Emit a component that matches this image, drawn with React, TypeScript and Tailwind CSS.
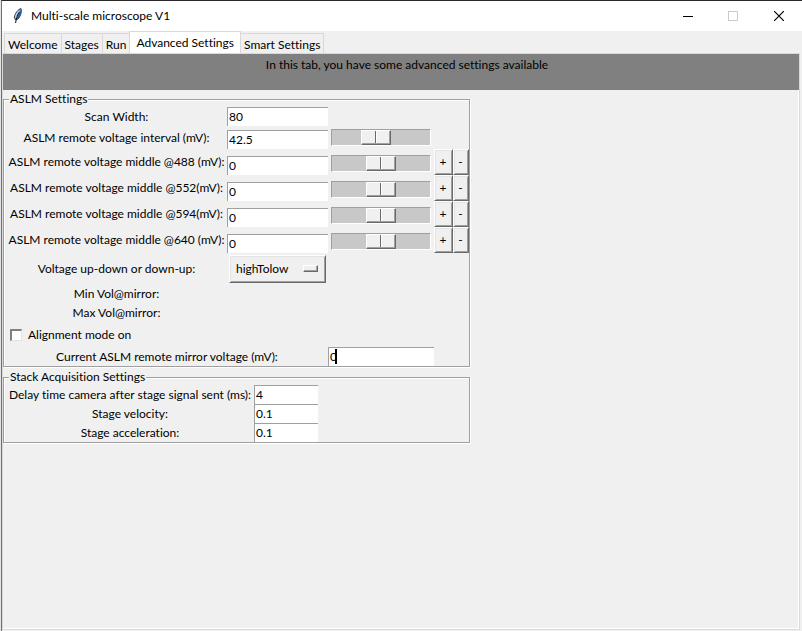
import React, { useState } from "react";

interface EntryProps {
  id: string;
  value: string;
  className?: string;
}

const Entry: React.FC<EntryProps> = ({ id, value, className = "" }) => (
  <input
    id={id}
    type="text"
    defaultValue={value}
    className={`h-[19px] w-full min-w-0 border-t border-l border-[#a0a0a0] bg-white px-px pb-0.5 text-[12px] leading-4 outline-none ${className}`}
  />
);

const Slider: React.FC<{ label: string; value: number }> = ({ label, value }) => (
  <div className="self-end px-[3px] pb-[3px]">
    <input
      type="range"
      aria-label={label}
      min={0}
      max={100}
      step={0.5}
      defaultValue={value}
      className="block h-[17px] w-full min-w-0 appearance-none border border-t-[#a0a0a0] border-r-white border-b-white border-l-[#a0a0a0] bg-[#c8c8c8] outline-none [&::-webkit-slider-thumb]:h-[15px] [&::-webkit-slider-thumb]:w-[30px] [&::-webkit-slider-thumb]:appearance-none [&::-webkit-slider-thumb]:border [&::-webkit-slider-thumb]:border-t-white [&::-webkit-slider-thumb]:border-l-white [&::-webkit-slider-thumb]:border-r-[#696969] [&::-webkit-slider-thumb]:border-b-[#696969] [&::-webkit-slider-thumb]:bg-[linear-gradient(90deg,#f0f0f0_13px,#696969_13px,#696969_14px,#fff_14px,#fff_15px,#f0f0f0_15px)] [&::-webkit-slider-thumb]:shadow-[inset_-1px_-1px_0_#a0a0a0]"
    />
  </div>
);

const StepButton: React.FC<{ sign: string; label: string }> = ({ sign, label }) => (
  <button
    aria-label={label}
    className="flex h-[26px] items-center justify-center border border-t-white border-r-[#696969] border-b-[#696969] border-l-white bg-[#f0f0f0] pr-px text-[12px] leading-4 shadow-[inset_1px_1px_0_#e3e3e3,inset_-1px_-1px_0_#a0a0a0]">
    {sign}
  </button>
);

const Group: React.FC<{ title: string; children: React.ReactNode }> = ({ title, children }) => (
  <fieldset className="min-w-0 border border-[#a0a0a0] pl-0.5 shadow-[1px_1px_0_#fff,inset_1px_1px_0_#fff]">
    <legend className="ml-[3px] bg-[#f0f0f0] px-px leading-4">{title}</legend>
    {children}
  </fieldset>
);

const tabs = ["Welcome", "Stages", "Run", "Advanced Settings", "Smart Settings"];

const channels = [
  { id: "v488", label: "ASLM remote voltage middle @488 (mV):" },
  { id: "v552", label: "ASLM remote voltage middle @552(mV):" },
  { id: "v594", label: "ASLM remote voltage middle @594(mV):" },
  { id: "v640", label: "ASLM remote voltage middle @640 (mV):" },
];

const stack = [
  { id: "delay", label: "Delay time camera after stage signal sent (ms):", value: "4" },
  { id: "velocity", label: "Stage velocity:", value: "0.1" },
  { id: "acceleration", label: "Stage acceleration:", value: "0.1" },
];

const row = "grid grid-cols-[221px_101px_1fr_35px] items-center";

const TitleBar = () => (
  <header className="flex h-[30px] shrink-0 items-center bg-white pl-2">
    <svg width="16" height="18" viewBox="0 0 16 18" aria-hidden="true">
      <path d="M11 1.500C8.500 2.200 4.800 6 4.300 10.500L5.500 13L8 12C10.500 9.500 12 5 11 1.500z" fill="#6aa5de" stroke="#222" strokeWidth="0.8" />
      <path d="M11.300 2C12 5.500 10.500 9.500 8 12L6.500 12.800C8 9 9.500 6 11.300 2z" fill="#2d5f96" />
      <path d="M9.500 5C8 7.500 6.500 10 5.600 16" fill="none" stroke="#111" strokeWidth="1" />
      <path d="M9 3.800C7 5.500 5.800 8 5.500 10.500" fill="none" stroke="#c9def2" strokeWidth="1" />
    </svg>
    <h1 className="ml-[5px] flex-1 text-[12px] leading-4">Multi-scale microscope V1</h1>
    <button aria-label="Minimize" className="flex h-full w-[45px] items-center justify-center">
      <svg width="10" height="10" shapeRendering="crispEdges">
        <path d="M0 5.500h10" stroke="#000" />
      </svg>
    </button>
    <button aria-label="Maximize" disabled className="flex h-full w-[46px] items-center justify-center">
      <svg width="10" height="10" shapeRendering="crispEdges">
        <rect x="0.5" y="0.5" width="9" height="9" fill="none" stroke="#ccc" />
      </svg>
    </button>
    <button aria-label="Close" className="flex h-full w-[46px] items-center justify-center">
      <svg width="10" height="10">
        <path d="M0 0l10 10M10 0L0 10" stroke="#000" strokeWidth="1.2" />
      </svg>
    </button>
  </header>
);

const AslmSettings = () => (
  <Group title="ASLM Settings">
    <div className={`${row} h-5`}>
      <label htmlFor="scan" className="text-center">
        Scan Width:
      </label>
      <Entry id="scan" value="80" className="self-start" />
    </div>
    <div className={`${row} h-[22px]`}>
      <label htmlFor="interval" className="text-center">
        ASLM remote voltage interval (mV):
      </label>
      <Entry id="interval" value="42.5" className="self-end" />
      <Slider label="Voltage interval" value={43} />
    </div>
    {channels.map(({ id, label }) => (
      <div key={id} className={`${row} h-[26px]`}>
        <label htmlFor={id} className="text-center whitespace-nowrap">
          {label}
        </label>
        <Entry id={id} value="0" className="self-end" />
        <Slider label={label} value={50} />
        <div className="grid grid-cols-[19px_16px]">
          <StepButton sign="+" label={`Increase ${id}`} />
          <StepButton sign="-" label={`Decrease ${id}`} />
        </div>
      </div>
    ))}
    <div className={`${row} h-[31px]`}>
      <label htmlFor="direction" className="text-center">
        Voltage up-down or down-up:
      </label>
      <div className="grid items-center px-0.5">
        <select
          id="direction"
          className="col-start-1 row-start-1 h-7 appearance-none border border-t-white border-r-[#696969] border-b-[#696969] border-l-white bg-[#f0f0f0] pl-1.5 text-[12px] shadow-[inset_1px_1px_0_#e3e3e3,inset_-1px_-1px_0_#a0a0a0] outline-none">
          <option>highTolow</option>
          <option>lowTohigh</option>
        </select>
        <span className="pointer-events-none col-start-1 row-start-1 mr-2 h-[7px] w-[15px] justify-self-end border border-t-white border-r-[#696969] border-b-[#696969] border-l-white shadow-[inset_-1px_-1px_0_#a0a0a0]" />
      </div>
    </div>
    <div className={`${row} h-[19px]`}>
      <span className="text-center">Min Vol@mirror:</span>
    </div>
    <div className={`${row} h-[19px]`}>
      <span className="text-center">Max Vol@mirror:</span>
    </div>
    <label className="flex h-[25px] items-center pl-1">
      <input
        type="checkbox"
        className="size-3 appearance-none border-t-2 border-l-2 border-r border-b border-t-[#808080] border-r-[#e3e3e3] border-b-[#e3e3e3] border-l-[#808080] bg-white checked:bg-[#696969]"
      />
      <span className="ml-1.5">Alignment mode on</span>
    </label>
    <div className="grid h-[19px] grid-cols-[322px_106px] items-center">
      <label htmlFor="current" className="text-center">
        Current ASLM remote mirror voltage (mV):
      </label>
      <div className="relative">
        <Entry id="current" value="0" className="block" />
        <span className="absolute top-0.5 left-[7px] h-[15px] w-0.5 bg-black" />
      </div>
    </div>
  </Group>
);

const StackSettings = () => (
  <Group title="Stack Acquisition Settings">
    {stack.map(({ id, label, value }) => (
      <div key={id} className="grid h-[19px] grid-cols-[248px_64px] items-center">
        <label htmlFor={id} className="text-center whitespace-nowrap">
          {label}
        </label>
        <Entry id={id} value={value} />
      </div>
    ))}
  </Group>
);

export default function App() {
  const [active, setActive] = useState("Advanced Settings");

  return (
    <div className="flex min-h-screen bg-[#e3e3e3] pl-px font-['Lato','Open_Sans',sans-serif] text-[12px] leading-4 text-black [font-variant-ligatures:none]">
      <div className="flex min-w-0 flex-1 flex-col border-t border-l border-t-[#2a2a2a] border-l-[#707070] bg-[#f0f0f0]">
        <TitleBar />
        <div role="tablist" className="flex h-[22px] items-end pl-[3px]">
          {tabs.map((tab) => (
            <button
              key={tab}
              role="tab"
              aria-selected={tab === active}
              onClick={() => setActive(tab)}
              className={
                tab === active
                  ? "-ml-px h-[22px] border border-b-0 border-[#d9d9d9] bg-white px-1.5"
                  : "-ml-px h-5 border border-b-0 border-[#d9d9d9] px-[3px] pt-0.5"
              }>
              {tab}
            </button>
          ))}
        </div>
        <main className="mr-0.5 mb-px flex-1 border border-[#d9d9d9] shadow-[inset_-1px_-1px_0_#fff]">
          <p className="h-9 bg-[#808080] pt-[3px] pl-3 text-center">
            In this tab, you have some advanced settings available
          </p>
          <div className="flex w-[467px] max-w-full flex-col gap-0.5 pt-px">
            <AslmSettings />
            <StackSettings />
          </div>
        </main>
      </div>
    </div>
  );
}
